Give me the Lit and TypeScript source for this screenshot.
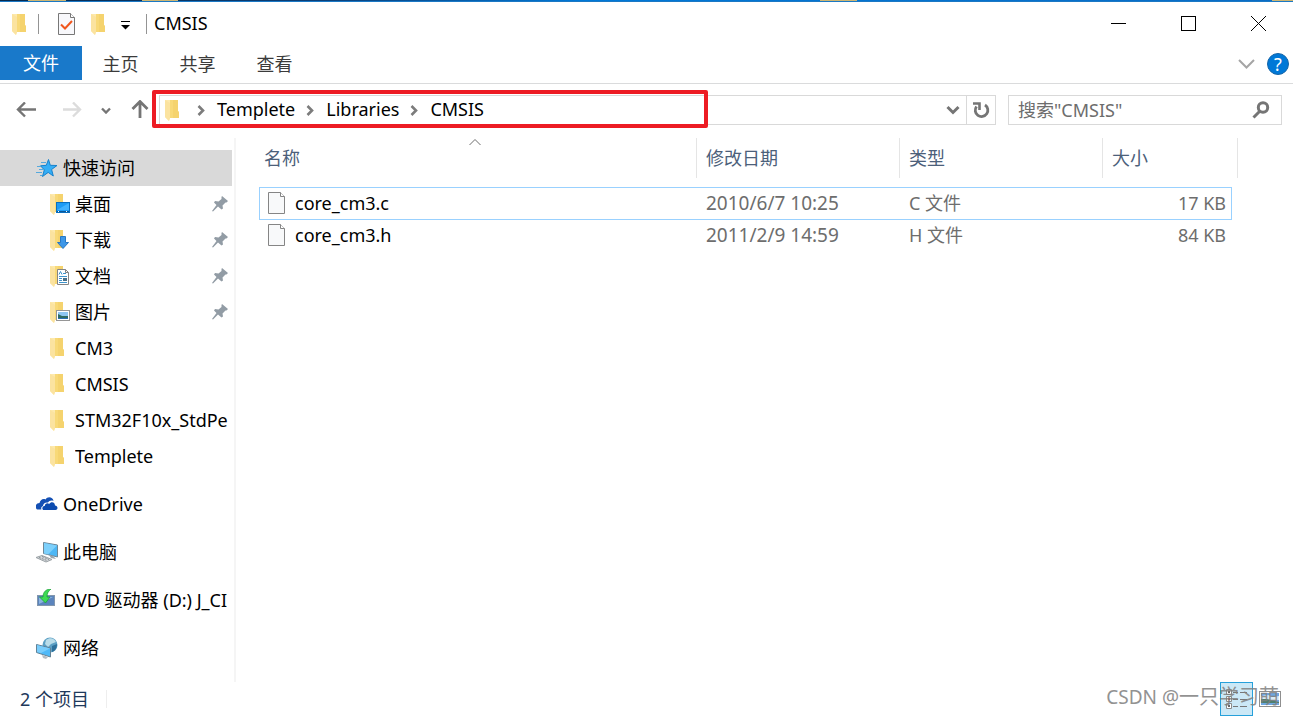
import { LitElement, html, css, svg, nothing } from "lit";
import { customElement, property } from "lit/decorators.js";

const folderShape = svg`
  <path d="M4 0H13V11L14 12V18H4Z" fill="#f8d978"/>
  <path d="M8 0H13V11L14 12V18H8Z" fill="#f3cf68" opacity=".6"/>
  <path d="M0 0H5V18L4 21L0 17Z" fill="#fde9ac"/>
  <path d="M0 0L5 3V18L4 21L0 17Z" fill="#fbe3a0"/>`;

const icons: Record<string, unknown> = {
  folder: svg`<svg width="22" height="22" viewBox="0 0 22 22"><g transform="translate(1 1)">${folderShape}</g></svg>`,
  desktop: svg`<svg width="22" height="22" viewBox="0 0 22 22"><g transform="translate(1 1)">${folderShape}</g>
    <rect x="7.5" y="9.5" width="13" height="10" fill="#1d9bf5" stroke="#0a6fc0"/>
    <path d="M8 17L20 10V17Z" fill="#41b2ff"/><path d="M8 18.5H20" stroke="#0b5797"/><path d="M9 18.5H10M17 18.5H18" stroke="#fff"/></svg>`,
  download: svg`<svg width="22" height="22" viewBox="0 0 22 22"><g transform="translate(1 1)">${folderShape}</g>
    <path d="M11.5 7.5H16.5V13.5H19.5L14 19.5L8.500 13.5H11.500Z" fill="#3d97e8" stroke="#2878c4"/></svg>`,
  document: svg`<svg width="22" height="22" viewBox="0 0 22 22"><g transform="translate(1 1)">${folderShape}</g>
    <path d="M8.500 4.500H16.500L19.500 7.500V19.500H8.500Z" fill="#fff" stroke="#858585"/>
    <path d="M16.500 4.500V7.500H19.500" fill="none" stroke="#858585"/>
    <path d="M10 9.500L11.500 6.500L13 9.500M14 8.500H17M10 11.500H18M10 13.500H13M10 15.500H13M10 17.500H18" stroke="#3e94cc" fill="none"/>
    <rect x="14" y="13" width="4" height="3" fill="#4b6f86"/></svg>`,
  picture: svg`<svg width="22" height="22" viewBox="0 0 22 22"><g transform="translate(1 1)">${folderShape}</g>
    <rect x="7.500" y="9.500" width="13" height="10" fill="#fff" stroke="#969696"/>
    <rect x="9" y="11" width="10" height="7" fill="#8fc6f2"/><path d="M9 13L13 15H19V18H9Z" fill="#2f6a61"/><path d="M9 17H19V18H9Z" fill="#2a6fb5"/></svg>`,
  star: svg`<svg width="22" height="22" viewBox="0 0 22 22">
    <path d="M12.500 2.500L14.300 8.300L21 8.500L15.600 12.500L17.300 19L12.200 15.400L6.500 19.500L8.300 12.900L4.500 8.800L10.300 8.300Z" fill="#35aef5" stroke="#1681cc"/>
    <path d="M5 5.500H10M1 9.500H5M3 12.500H7M0 15.500H6M4 18.500H6" stroke="#55a9dd"/></svg>`,
  cloud: svg`<svg width="24" height="22" viewBox="0 0 24 22">
    <path d="M0 15C-1 12 1 10 3.500 10C4 7 7 5 9.500 6.500C11.500 3 17 4 17.500 8C15 7 13 8 12 9.500C9 9 7 11 7 13C5 14 5 15 5.500 16.500H2C1 16.500.3 16 0 15Z" fill="#1450b4"/>
    <path d="M7 17C5.500 15 7 13 8.700 13C9 10.500 11.500 9.500 13.200 11C15 8 19 9 19 12.500C22 12.500 22.500 17 19.500 17H8.500Z" fill="#0c4bb0"/></svg>`,
  computer: svg`<svg width="24" height="22" viewBox="0 0 24 22">
    <path d="M7.500 1.500L21.500 4V16L7.500 12.500Z" fill="#4db7f5" stroke="#6f8796"/>
    <path d="M8 2L21 4.500L12 13.500L8 12.500Z" fill="#7dd0fb"/>
    <path d="M13 14L17 15L20 18L15 17Z" fill="#9aa6ad"/>
    <path d="M0 16.500L6 14.500L16 18.500L10 21Z" fill="#d5d9dc" stroke="#9aa1a5"/><path d="M3 16.500L11 19.500M6 15.500L13 18.500" stroke="#858c91" stroke-dasharray="2 1"/></svg>`,
  dvd: svg`<svg width="22" height="22" viewBox="0 0 22 22">
    <rect x="1.500" y="6.500" width="17" height="10" fill="#5b84bd" stroke="#8296ad"/><path d="M3 8H17L3 15Z" fill="#8db3df"/>
    <path d="M15 0C10 0 7 3 7 8H3.500L9.500 14L14 8H11C11 5 12 2 15 0Z" fill="#3edb54" stroke="#159c33" stroke-width=".7"/></svg>`,
  network: svg`<svg width="24" height="22" viewBox="0 0 24 22">
    <circle cx="14" cy="8" r="7.500" fill="#5b9fc4"/><path d="M10 3C14 0 18 1 20 5L15 7L12 10L9 7Z" fill="#b9dce9"/><path d="M16 9L21 7C21 11 19 14 16 15Z" fill="#2d6f9a"/>
    <path d="M.5 7.500L14.500 11V20L.5 15.500Z" fill="#4fb9f8" stroke="#628296"/><path d="M1 8L14 11.500L5 16L1 15Z" fill="#79cdfc"/>
    <path d="M6 18L12 20L10 22L7 21Z" fill="#b7bec3"/></svg>`,
  pin: svg`<svg width="16" height="16" viewBox="0 0 16 16">
    <path d="M10 0L16 5L14.500 6.500H13.500L10.500 9.500L11 12.500L9.500 13.500L6 10.500L1 15.500L0 15L4.500 9L2 6.500L3 5L6.500 5.500L9.500 3V1Z" fill="#929ca5"/></svg>`,
  file: svg`<svg width="18" height="22" viewBox="0 0 18 22">
    <path d="M.5.5H12.500L16.500 4.500V21.500H.5Z" fill="#f8f9fa" stroke="#858585"/><path d="M12.500.5V4.500H16.500" fill="#fff" stroke="#858585"/></svg>`,
  task: svg`<svg width="18" height="22" viewBox="0 0 18 22">
    <path d="M.5.5H12.500L16.500 4.500V21.500H.5Z" fill="#f8f8fb" stroke="#777"/><path d="M12.500.5V4.500H16.500" fill="#fff" stroke="#777"/>
    <path d="M3 11.500L7 15.500L14 8" fill="none" stroke="#f0561d" stroke-width="2"/></svg>`,
  customize: svg`<svg width="10" height="9" viewBox="0 0 10 9"><path d="M1 .5H10" stroke="#000"/><path d="M1 4H10L5.500 8.500Z"/></svg>`,
  minimize: svg`<svg width="15" height="15" viewBox="0 0 15 15"><path d="M0 7.500H15" stroke="#000"/></svg>`,
  maximize: svg`<svg width="15" height="15" viewBox="0 0 15 15"><rect x=".5" y=".5" width="14" height="14" fill="none" stroke="#000"/></svg>`,
  close: svg`<svg width="15" height="15" viewBox="0 0 15 15"><path d="M0 0L15 15M15 0L0 15" stroke="#000"/></svg>`,
  ribbon: svg`<svg width="17" height="10" viewBox="0 0 17 10"><path d="M1 1L8.500 8.500L16 1" fill="none" stroke="#a5a5a5" stroke-width="2"/></svg>`,
  back: svg`<svg width="20" height="16" viewBox="0 0 20 16"><path d="M20 7.500H3M9 .5L2 7.500L9 14.500" fill="none" stroke="#757575" stroke-width="2.400"/></svg>`,
  forward: svg`<svg width="20" height="16" viewBox="0 0 20 16"><path d="M1 7.500H18M11 .5L18 7.500L11 14.500" fill="none" stroke="#dcdcdc" stroke-width="2.400"/></svg>`,
  recent: svg`<svg width="10" height="7" viewBox="0 0 10 7"><path d="M1 1.500L5 5.500L9 1.500" fill="none" stroke="#757575" stroke-width="2.400"/></svg>`,
  up: svg`<svg width="18" height="20" viewBox="0 0 18 20"><path d="M9 18V2M1.500 9L9 1.500L16.500 9" fill="none" stroke="#757575" stroke-width="2.800"/></svg>`,
  crumb: svg`<svg width="31" height="12" viewBox="0 0 31 12"><path d="M12.500 2L17 6.500L12.500 11" fill="none" stroke="#7c7c7c" stroke-width="2.600"/></svg>`,
  drop: svg`<svg width="14" height="10" viewBox="0 0 14 10"><path d="M1.500 2L7 7.500L12.500 2" fill="none" stroke="#757575" stroke-width="3"/></svg>`,
  refresh: svg`<svg width="18" height="18" viewBox="0 0 18 18"><path d="M13 4A6.300 6.300 0 1 1 4.500 5.500" fill="none" stroke="#757575" stroke-width="2.800"/><path d="M1 2.500H7.500V9" fill="none" stroke="#757575" stroke-width="2.600"/></svg>`,
  search: svg`<svg width="18" height="18" viewBox="0 0 18 18"><circle cx="11" cy="6.500" r="4.700" fill="none" stroke="#757575" stroke-width="3"/><path d="M8 10L1.500 16.500" stroke="#757575" stroke-width="3"/></svg>`,
  sort: svg`<svg width="12" height="7" viewBox="0 0 12 7"><path d="M.5 6L6 .5L11.500 6" fill="none" stroke="#6d6d6d"/></svg>`,
  details: svg`<svg width="22" height="20" viewBox="0 0 22 20">
    <path d="M.5.5H5.500V5.500H.5ZM.5 7.500H5.500V12.500H.5ZM.5 14.500H5.500V19.500H.5Z" fill="#fff" stroke="#8b8b8b"/>
    <path d="M2 3H4M2 17H4" stroke="#666" stroke-width="2"/><path d="M2 10H4" stroke="#c03b2d" stroke-width="2"/>
    <path d="M7 3.500H12M14 3.500H21M7 10.500H12M14 10.500H21M7 17.500H12M14 17.500H21" stroke="#777"/></svg>`,
  thumbs: svg`<svg width="22" height="16" viewBox="0 0 22 16">
    <rect x=".5" y=".5" width="21" height="15" fill="#fff" stroke="#8f8f8f"/><rect x="2" y="2" width="18" height="12" fill="#6fa8e2"/>
    <path d="M2 5L9 4L14 6L20 5V9H2Z" fill="#dcecf7"/><path d="M2 8L8 8L20 11V12H2Z" fill="#4f7f70"/></svg>`,
};

interface Place { label: string; icon: string; pinned?: boolean; selected?: boolean }

const quick: Place[] = [
  { label: "桌面", icon: "desktop", pinned: true },
  { label: "下载", icon: "download", pinned: true },
  { label: "文档", icon: "document", pinned: true },
  { label: "图片", icon: "picture", pinned: true },
  { label: "CM3", icon: "folder" },
  { label: "CMSIS", icon: "folder" },
  { label: "STM32F10x_StdPe", icon: "folder" },
  { label: "Templete", icon: "folder" },
];

const roots: Place[] = [
  { label: "OneDrive", icon: "cloud" },
  { label: "此电脑", icon: "computer" },
  { label: "DVD 驱动器 (D:) J_CI", icon: "dvd" },
  { label: "网络", icon: "network" },
];

const files = [
  { name: "core_cm3.c", date: "2010/6/7 10:25", type: "C 文件", size: "17 KB", focused: true },
  { name: "core_cm3.h", date: "2011/2/9 14:59", type: "H 文件", size: "84 KB", focused: false },
];

const shared = css`
  * { box-sizing: border-box; }
  svg { display: block; flex: none; }
  button, input {
    font: inherit; color: inherit; background: none; border: 0; padding: 0; margin: 0; border-radius: 0;
  }
  button { display: flex; align-items: center; justify-content: center; flex: none; }
`;

@customElement("title-bar")
class TitleBar extends LitElement {
  @property() heading = "";
  static styles = [shared, css`
    :host { display: flex; height: 44px; justify-content: space-between; flex: none; }
    .left { display: flex; align-items: center; padding: 0 0 1px 11px; }
    .sep { width: 1px; height: 20px; background: #949494; }
    .app { width: 27px; justify-content: flex-start; }
    .props { width: 37px; padding-left: 19px; }
    .new { width: 22px; margin-left: 14px; }
    .custom { width: 20px; margin: 4px 11px 0 3px; }
    h1 { margin: 0; padding: 0 0 2px 7px; font-size: 18px; line-height: 24px; font-weight: inherit; color: #000; }
    .caption { display: flex; }
    .caption button { width: 70px; height: 43px; }
  `];
  render() {
    return html`
      <div class="left">
        <button class="app" aria-label="窗口菜单">${icons.folder}</button>
        <span class="sep"></span>
        <button class="props" aria-label="属性">${icons.task}</button>
        <button class="new" aria-label="新建文件夹">${icons.folder}</button>
        <button class="custom" aria-label="自定义快速访问工具栏">${icons.customize}</button>
        <span class="sep"></span>
        <h1>${this.heading}</h1>
      </div>
      <div class="caption">
        <button aria-label="最小化">${icons.minimize}</button>
        <button aria-label="最大化">${icons.maximize}</button>
        <button aria-label="关闭">${icons.close}</button>
      </div>`;
  }
}

@customElement("ribbon-tabs")
class RibbonTabs extends LitElement {
  static styles = [shared, css`
    :host { display: flex; height: 38px; border-bottom: 1px solid #dadbdc; flex: none; }
    button { width: 77px; height: 35px; color: #3b3b3b; }
    .file { width: 82px; height: 34px; background: #1979ca; color: #fff; }
    .right { display: flex; height: 35px; align-items: center; gap: 12px; margin-left: auto; padding-right: 4px; }
    .right .toggle { width: 17px; }
    .right .help {
      width: 22px; height: 22px; border-radius: 50%; background: #0078d7; border: 1px solid #1565a8;
      color: #fff; font-size: 18px; line-height: 20px;
    }
  `];
  render() {
    return html`
      <button class="file">文件</button>
      <button>主页</button><button>共享</button><button>查看</button>
      <div class="right">
        <button class="toggle" aria-label="展开功能区">${icons.ribbon}</button>
        <button class="help">?</button>
      </div>`;
  }
}

@customElement("address-bar")
class AddressBar extends LitElement {
  @property({ attribute: false }) path: string[] = [];
  static styles = [shared, css`
    :host { display: flex; height: 54px; padding: 11px 11px 0 16px; align-items: flex-start; flex: none; }
    .nav { display: flex; align-items: center; height: 30px; width: 143px; }
    .nav button { height: 30px; }
    .back { margin-right: 26px; }
    .forward { margin-right: 19px; }
    .recent { margin-right: 20px; }
    .box { position: relative; display: flex; flex: 1; min-width: 0; height: 30px; border: 1px solid #d9d9d9; align-items: center; }
    .crumbs { display: flex; flex: 1; align-items: center; padding-left: 4px; color: #000; }
    .crumbs button { padding-bottom: 2px; }
    .drop { width: 26px; height: 28px; }
    .refresh { width: 29px; height: 28px; border-left: 1px solid #d9d9d9; }
    .marker {
      position: absolute; left: -8px; top: -6px; width: 556px; height: 38px;
      border: 4px solid #ed1c24; border-radius: 2px; pointer-events: none;
    }
    .search { display: flex; width: 274px; height: 30px; margin-left: 12px; padding: 0 11px 0 9px; border: 1px solid #d9d9d9; align-items: center; }
    .search input { flex: 1; min-width: 0; height: 28px; outline: 0; }
    .search input::placeholder { color: #6d6d6d; opacity: 1; }
  `];
  render() {
    return html`
      <nav class="nav">
        <button class="back" aria-label="后退">${icons.back}</button>
        <button class="forward" aria-label="前进">${icons.forward}</button>
        <button class="recent" aria-label="最近浏览的位置">${icons.recent}</button>
        <button aria-label="上移">${icons.up}</button>
      </nav>
      <div class="box">
        <div class="crumbs">
          ${icons.folder}
          ${this.path.map((part) => html`${icons.crumb}<button>${part}</button>`)}
        </div>
        <button class="drop" aria-label="以前的位置">${icons.drop}</button>
        <button class="refresh" aria-label="刷新">${icons.refresh}</button>
        <div class="marker"></div>
      </div>
      <div class="search">
        <input type="text" aria-label="搜索" placeholder='搜索"CMSIS"'>
        <button aria-label="开始搜索">${icons.search}</button>
      </div>`;
  }
}

@customElement("nav-pane")
class NavPane extends LitElement {
  static styles = [shared, css`
    :host { display: block; width: 236px; padding: 12px 2px 0 0; border-right: 2px solid #f5f5f5; flex: none; overflow: hidden; color: #000; }
    ul { list-style: none; margin: 0; padding: 0; }
    .item { display: flex; align-items: center; height: 36px; width: 232px; padding-left: 36px; text-decoration: none; color: inherit; overflow: hidden; }
    .child { padding-left: 49px; }
    .selected { background: #d9d9d9; }
    .icon { width: 27px; flex: none; }
    .child .icon { width: 26px; }
    .label { flex: 1; min-width: 0; white-space: nowrap; overflow: hidden; }
    .pin { padding-right: 4px; }
    .roots li { margin-top: 12px; }
  `];
  item(p: Place, child: boolean) {
    return html`<li><a href="#" class="item ${child ? "child" : ""} ${p.selected ? "selected" : ""}">
      <span class="icon">${icons[p.icon]}</span><span class="label">${p.label}</span>
      ${p.pinned ? html`<span class="pin">${icons.pin}</span>` : nothing}</a></li>`;
  }
  render() {
    return html`
      <ul>
        ${this.item({ label: "快速访问", icon: "star", selected: true }, false)}
        ${quick.map((p) => this.item(p, true))}
      </ul>
      <ul class="roots">${roots.map((p) => this.item(p, false))}</ul>`;
  }
}

@customElement("file-list")
class FileList extends LitElement {
  static styles = [shared, css`
    :host { display: block; flex: 1; min-width: 0; padding-left: 23px; overflow: hidden; }
    table { table-layout: fixed; width: 979px; border-collapse: separate; border-spacing: 0; }
    .c-name { width: 438px; }
    .c-mid { width: 203px; }
    .c-size { width: 129px; }
    .c-end { width: 6px; }
    th { position: relative; height: 40px; padding: 0 0 0 9px; border-right: 1px solid #e5e5e5; font-weight: inherit; color: #4c607a; }
    th:first-child { padding-left: 5px; }
    .sort { position: absolute; left: 210px; top: 1px; }
    .gap td { height: 9px; padding: 0; }
    td { height: 32px; padding: 0 0 2px 9px; color: #6d6d6d; white-space: nowrap; }
    .name { color: #000; }
    .name div { display: flex; align-items: center; gap: 9px; }
    .date { font-size: 19px; }
    .size { text-align: right; padding-right: 6px; }
    .focused td { height: 33px; border-top: 1px solid #99d1ff; border-bottom: 1px solid #99d1ff; }
    .focused .name { border-left: 1px solid #99d1ff; padding-left: 8px; }
    .focused .size { border-right: 1px solid #99d1ff; padding-right: 5px; }
    .file .end { border: 0; padding: 0; }
  `];
  render() {
    return html`
      <table>
        <colgroup><col class="c-name"><col class="c-mid"><col class="c-mid"><col class="c-size"><col class="c-end"></colgroup>
        <thead>
          <tr>
            <th aria-sort="ascending"><span class="sort">${icons.sort}</span><button>名称</button></th>
            <th><button>修改日期</button></th>
            <th><button>类型</button></th>
            <th colspan="2"><button>大小</button></th>
          </tr>
        </thead>
        <tbody>
          <tr class="gap"><td colspan="5"></td></tr>
          ${files.map((f) => html`
            <tr class="file ${f.focused ? "focused" : ""}">
              <td class="name"><div>${icons.file}<span>${f.name}</span></div></td>
              <td class="date">${f.date}</td>
              <td>${f.type}</td>
              <td class="size">${f.size}</td>
              <td class="end"></td>
            </tr>`)}
        </tbody>
      </table>`;
  }
}

@customElement("status-bar")
class StatusBar extends LitElement {
  static styles = [shared, css`
    :host { position: relative; display: flex; height: 34px; padding: 0 12px 0 20px; align-items: center; flex: none; color: #1e395b; }
    .count { padding-right: 17px; border-right: 1px solid #eee; line-height: 18px; }
    .views { display: flex; margin-left: auto; gap: 6px; }
    .views button { height: 34px; }
    .views .details { width: 33px; background: #cbe8f6; border: 1px solid #26a0da; }
    .watermark { position: absolute; right: 14px; top: 2px; font-size: 20px; line-height: 26px; color: #808080; opacity: .85; white-space: nowrap; pointer-events: none; }
    .latin { font-size: 19px; }
  `];
  render() {
    return html`
      <span class="count">2 个项目</span>
      <div class="views">
        <button class="details" aria-label="详细信息">${icons.details}</button>
        <button aria-label="大图标">${icons.thumbs}</button>
      </div>
      <div class="watermark"><span class="latin">CSDN @</span>一只学习萌</div>`;
  }
}

@customElement("app-root")
class AppRoot extends LitElement {
  static styles = [shared, css`
    :host {
      display: flex; flex-direction: column; min-height: 100vh; background: #fff;
      font-family: "Noto Sans", "Noto Sans CJK SC", sans-serif; font-size: 18px; line-height: 24px; font-weight: 400;
    }
    .strip {
      height: 2px; flex: none; border-bottom: 1px solid #1b78c4;
      background:
        linear-gradient(#cdb673, #cdb673) 28px 0 / 38px 1px no-repeat,
        linear-gradient(#cdb673, #cdb673) 142px 0 / 36px 1px no-repeat,
        linear-gradient(#cdb673, #cdb673) 820px 0 / 37px 1px no-repeat,
        linear-gradient(#cdb673, #cdb673) 100% 0 / 21px 1px no-repeat,
        linear-gradient(90deg, #06294d, #0b3f78 25%, #0078d7 45%, #0a6cc4);
    }
    .main { display: flex; flex: 1; }
  `];
  render() {
    return html`
      <div class="strip"></div>
      <title-bar heading="CMSIS"></title-bar>
      <ribbon-tabs></ribbon-tabs>
      <address-bar .path=${["Templete", "Libraries", "CMSIS"]}></address-bar>
      <div class="main"><nav-pane></nav-pane><file-list></file-list></div>
      <status-bar></status-bar>`;
  }
}
